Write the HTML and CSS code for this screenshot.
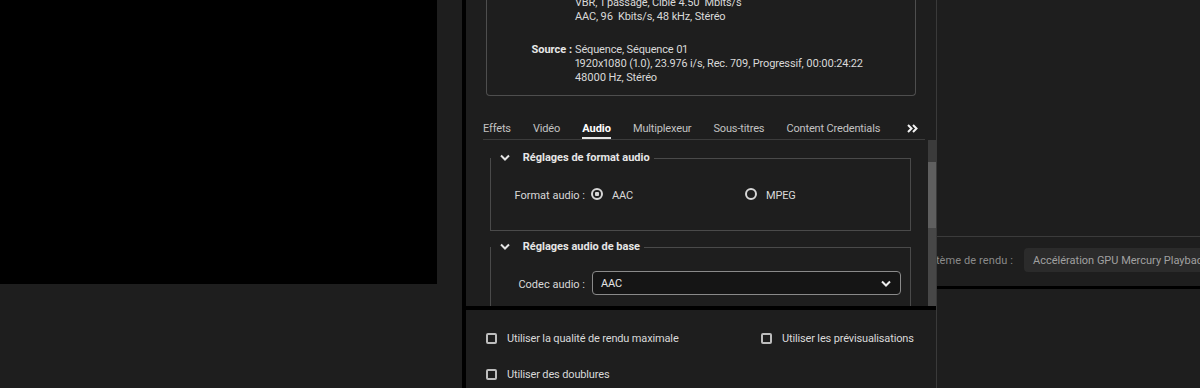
FILE: index.html
```html
<!DOCTYPE html>
<html lang="fr">
<head>
    <meta charset="UTF-8">
    <meta name="viewport" content="width=device-width, initial-scale=1.0">
    <title>Paramètres d'exportation</title>
    <link rel="stylesheet" href="styles.css">
</head>

<body>
    <div class="app">
        <!-- Moniteur (aperçu vidéo) -->
        <div class="monitor">
            <div class="video"></div>
        </div>

        <!-- Fenêtre des réglages d'exportation -->
        <div class="dialog">
            <div class="summary">
                <div class="info">
                    <div class="info-group">
                        <div class="info-label"></div>
                        <div class="info-lines">
                            <div>VBR, 1 passage, Cible 4.50&nbsp; Mbits/s</div>
                            <div>AAC, 96&nbsp; Kbits/s, 48 kHz, Stéréo</div>
                        </div>
                    </div>
                    <div class="info-group">
                        <div class="info-label">Source :</div>
                        <div class="info-lines">
                            <div>Séquence, Séquence 01</div>
                            <div>1920x1080 (1.0), 23.976 i/s, Rec. 709, Progressif, 00:00:24:22</div>
                            <div>48000 Hz, Stéréo</div>
                        </div>
                    </div>
                </div>
            </div>

            <div class="tabs">
                <span class="tab">Effets</span>
                <span class="tab">Vidéo</span>
                <span class="tab active">Audio</span>
                <span class="tab">Multiplexeur</span>
                <span class="tab">Sous-titres</span>
                <span class="tab">Content Credentials</span>
                <span class="tab more">
                    <svg width="11" height="9" viewBox="0 0 11 9"><path d="M1 1 L4.5 4.5 L1 8 M6 1 L9.5 4.5 L6 8" fill="none" stroke="#f2f2f2" stroke-width="2"/></svg>
                </span>
            </div>

            <div class="settings">
                <div class="settings-body">
                    <fieldset class="group">
                        <legend>
                            <svg class="chevron" width="10" height="7" viewBox="0 0 10 7"><path d="M1 1.5 L5 5.5 L9 1.5" fill="none" stroke="#e4e4e4" stroke-width="2"/></svg>
                            Réglages de format audio
                        </legend>
                        <div class="field-row">
                            <span class="field-label">Format audio :</span>
                            <div class="radios">
                                <label class="radio"><span class="dot checked"></span><span class="radio-text">AAC</span></label>
                                <label class="radio"><span class="dot"></span><span class="radio-text">MPEG</span></label>
                            </div>
                        </div>
                    </fieldset>

                    <fieldset class="group group-open">
                        <legend>
                            <svg class="chevron" width="10" height="7" viewBox="0 0 10 7"><path d="M1 1.5 L5 5.5 L9 1.5" fill="none" stroke="#e4e4e4" stroke-width="2"/></svg>
                            Réglages audio de base
                        </legend>
                        <div class="field-row">
                            <span class="field-label">Codec audio :</span>
                            <div class="select">
                                <span>AAC</span>
                                <svg width="10" height="7" viewBox="0 0 10 7"><path d="M1 1.5 L5 5.5 L9 1.5" fill="none" stroke="#ececec" stroke-width="2"/></svg>
                            </div>
                        </div>
                    </fieldset>
                </div>
                <div class="scrollbar"><div class="thumb"></div></div>
            </div>

            <div class="footer">
                <label class="check"><span class="box"></span>Utiliser la qualité de rendu maximale</label>
                <label class="check"><span class="box"></span>Utiliser les prévisualisations</label>
                <label class="check"><span class="box"></span>Utiliser des doublures</label>
            </div>
        </div>

        <!-- Panneau de droite (derrière la fenêtre) -->
        <div class="side">
            <div class="side-top"></div>
            <div class="side-row">
                <div class="side-label"><span>Système de rendu :</span></div>
                <div class="side-select">Accélération GPU Mercury Playback Engine (CUDA)</div>
            </div>
        </div>
    </div>
</body>
</html>
```

FILE: styles.css
```css
html, body {
    margin: 0;
    padding: 0;
    height: 100%;
    overflow: hidden;
    background: #1e1e1e;
}

body {
    font-family: Roboto, "Liberation Sans", sans-serif;
    font-size: 11px;
    font-variant-numeric: proportional-nums;
    letter-spacing: -0.15px;
    color: #d9d9d9;
}

.app {
    display: flex;
    height: 388px;
}

/* Moniteur */
.monitor {
    width: 462px;
    flex: none;
}

.video {
    width: 437px;
    height: 284px;
    background: #000;
}

/* Fenêtre d'exportation */
.dialog {
    width: 470px;
    flex: none;
    border-left: 4px solid #000;
    background: #1e1e1e;
    display: flex;
    flex-direction: column;
}

.summary {
    height: 96px;
    padding: 0 20px;
    overflow: hidden;
}

.info {
    margin-top: -4px;
    border: 1px solid #4e4e4e;
    border-top: 0;
    border-radius: 0 0 4px 4px;
    padding-bottom: 10px;
}

.info-group {
    display: grid;
    grid-template-columns: 85px 1fr;
    column-gap: 3px;
    line-height: 14px;
}

.info-group + .info-group {
    margin-top: 19px;
}

.info-label {
    text-align: right;
    font-weight: bold;
    letter-spacing: 0;
    color: #e8e8e8;
}

/* Onglets */
.tabs {
    display: flex;
    gap: 22px;
    margin: 21px 11px 0 17px;
    height: 22px;
    border-bottom: 1px solid #3c3c3c;
}

.tab {
    padding-top: 2px;
    line-height: 20px;
    color: #c2c2c2;
    white-space: nowrap;
}

.tab.active {
    color: #fff;
    font-weight: bold;
    letter-spacing: 0;
    box-shadow: inset 0 -2px 0 #e6e6e6;
}

.tab.more {
    margin-left: auto;
    margin-right: 7px;
    padding-top: 0;
    display: flex;
    align-items: center;
}

/* Zone défilante */
.settings {
    display: flex;
    height: 166px;
    overflow: hidden;
}

.settings-body {
    flex: 1;
    padding: 10px 17px 0 24px;
    overflow: hidden;
}

.scrollbar {
    width: 8px;
    flex: none;
    background: linear-gradient(#3b3b3b 0 22px, #474747 22px);
}

.thumb {
    margin-top: 22px;
    height: 66px;
    background: #5f5f5f;
}

.group {
    margin: 0;
    padding: 16px 0 24px;
    border: 1px solid #4a4a4a;
    min-width: 0;
}

.group + .group {
    margin-top: 8px;
}

.group-open {
    padding-bottom: 40px;
}

.group legend {
    padding: 0 4px 0 9px;
    line-height: 16px;
    font-weight: bold;
    letter-spacing: 0;
    color: #e6e6e6;
}

.chevron {
    vertical-align: middle;
    margin-right: 10px;
    position: relative;
    top: -1px;
}

.field-row {
    display: grid;
    grid-template-columns: 94px 1fr;
    column-gap: 6px;
    align-items: center;
    height: 24px;
}

.field-label {
    padding-top: 2px;
    text-align: right;
    letter-spacing: 0;
    white-space: nowrap;
}

.radios {
    display: flex;
}

.radio {
    display: flex;
    align-items: center;
    gap: 9px;
    width: 154px;
}

.radio-text {
    padding-top: 2px;
}

.dot {
    width: 12px;
    height: 12px;
    box-sizing: border-box;
    border: 2px solid #d6d6d6;
    border-radius: 50%;
}

.dot.checked {
    background: radial-gradient(circle, #d6d6d6 0 2px, transparent 2.5px);
}

.select {
    margin: 0 9px 0 1px;
    height: 24px;
    box-sizing: border-box;
    border: 1px solid #8a8a8a;
    border-radius: 4px;
    background: #151515;
    padding: 0 9px 0 8px;
    display: flex;
    align-items: center;
    justify-content: space-between;
    color: #e4e4e4;
}

/* Bas de la fenêtre */
.footer {
    flex: 1;
    border-top: 4px solid #000;
    padding: 19px 20px 0;
    display: grid;
    grid-template-columns: 275px auto;
    row-gap: 16px;
    align-content: start;
}

.check {
    display: flex;
    align-items: center;
    gap: 10px;
    line-height: 20px;
    white-space: nowrap;
}

.box {
    width: 11px;
    height: 11px;
    box-sizing: border-box;
    border: 2px solid #bdbdbd;
    border-radius: 2px;
    margin-top: -1px;
}

/* Panneau de droite */
.side {
    flex: 1;
    min-width: 0;
    border-left: 1px solid #3a3a3a;
    overflow: hidden;
    display: flex;
    flex-direction: column;
}

.side-top {
    height: 236px;
    flex: none;
    border-bottom: 1px solid #3b3b3b;
}

.side-row {
    height: 52px;
    box-sizing: border-box;
    padding-top: 11px;
    border-bottom: 3px solid #000;
    display: flex;
    align-items: flex-start;
}

.side-label {
    width: 76px;
    flex: none;
    display: flex;
    justify-content: flex-end;
    padding-top: 1px;
    line-height: 24px;
    letter-spacing: 0.1px;
    color: #8a8a8a;
    white-space: nowrap;
}

.side-select {
    margin-left: 11px;
    height: 24px;
    box-sizing: border-box;
    padding: 1px 9px 0;
    line-height: 23px;
    letter-spacing: 0;
    border-radius: 4px;
    background: #2b2b2b;
    color: #a0a0a0;
    white-space: nowrap;
}
```
